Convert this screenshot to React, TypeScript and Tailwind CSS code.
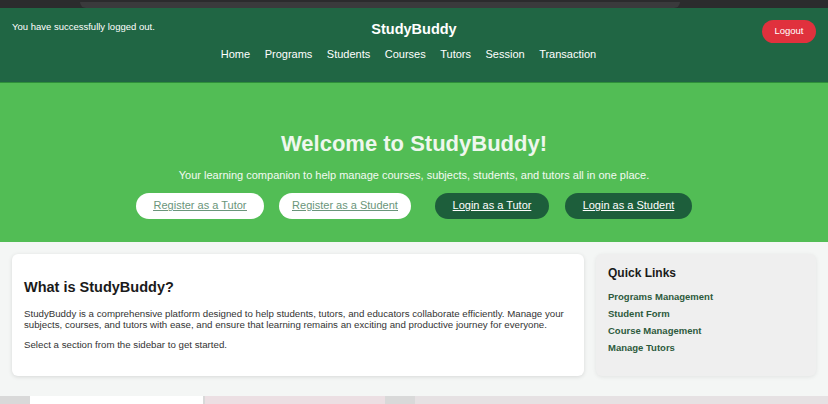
const navLinks = ["Home", "Programs", "Students", "Courses", "Tutors", "Session", "Transaction"];
const quickLinks = ["Programs Management", "Student Form", "Course Management", "Manage Tutors"];

export default function App() {
  return (
    <div className="w-[828px] h-[404px] overflow-hidden bg-[#f4f6f5] font-['Liberation_Sans',Arial,sans-serif] flex flex-col">
      {/* browser chrome strip */}
      <div className="h-[8px] bg-[#2b2b2d] flex items-end px-[80px]">
        <div className="h-[6px] w-[600px] bg-[#3a3a3c] rounded-b-md" />
      </div>

      <header className="h-[74px] bg-[#206644] text-white flex items-start justify-between px-3 pt-[10px] relative">
        <p className="text-[9.5px] mt-[2px] w-[180px]">You have successfully logged out.</p>
        <div className="flex flex-col items-center">
          <h1 className="text-[14.5px] font-bold leading-none mt-[4px]">StudyBuddy</h1>
          <nav className="flex gap-[14.5px] mt-[9px] mr-[11px] text-[11px]">
            {navLinks.map((l) => (
              <a key={l}>{l}</a>
            ))}
          </nav>
        </div>
        <div className="w-[180px] flex justify-end">
          <button className="bg-[#e0313d] text-white text-[9.5px] rounded-full w-[54px] h-[23px] mt-[2px]">Logout</button>
        </div>
      </header>

      <section className="h-[160px] bg-[#52bd55] border-t border-[#2e8f3a] flex flex-col items-center">
        <h2 className="text-[22px] font-bold text-[#eef7ee] mt-[50px] leading-none">Welcome to StudyBuddy!</h2>
        <p className="text-[11px] text-[#f2faf2] mt-[12px]">
          Your learning companion to help manage courses, subjects, students, and tutors all in one place.
        </p>
        <div className="flex items-center mt-[9px] text-[11px] underline">
          <button className="w-[128px] h-[26px] rounded-full bg-white text-[#6a957a] underline">Register as a Tutor</button>
          <button className="w-[132px] h-[26px] rounded-full bg-white text-[#6a957a] underline ml-[15px]">Register as a Student</button>
          <button className="w-[114px] h-[26px] rounded-full bg-[#1d5e3b] text-white underline ml-[24px]">Login as a Tutor</button>
          <button className="w-[127px] h-[26px] rounded-full bg-[#1d5e3b] text-white underline ml-[16px]">Login as a Student</button>
        </div>
      </section>

      <main className="flex gap-3 px-3 pt-[12px] h-[154px]">
        <div className="w-[572px] h-[122px] bg-white rounded-md shadow-[0_1px_4px_rgba(0,0,0,0.12)] px-3 pt-[26px]">
          <h3 className="text-[14.5px] font-bold text-[#1a1a1a] leading-none">What is StudyBuddy?</h3>
          <p className="text-[9.7px] text-[#333] mt-[13px] leading-[11px]">
            StudyBuddy is a comprehensive platform designed to help students, tutors, and educators collaborate efficiently. Manage your
            subjects, courses, and tutors with ease, and ensure that learning remains an exciting and productive journey for everyone.
          </p>
          <p className="text-[9.7px] text-[#333] mt-[8px]">Select a section from the sidebar to get started.</p>
        </div>
        <div className="w-[220px] h-[122px] bg-[#efefef] rounded-md shadow-[0_1px_4px_rgba(0,0,0,0.08)] px-3 pt-[13px]">
          <h4 className="text-[12px] font-bold text-[#1a1a1a] leading-none">Quick Links</h4>
          <ul className="mt-[12px] flex flex-col gap-[5px] text-[9.5px] font-bold text-[#2d5a3c] leading-[12px]">
            {quickLinks.map((l) => (
              <li key={l}>{l}</li>
            ))}
          </ul>
        </div>
      </main>

      {/* taskbar strip */}
      <div className="h-[8px] bg-[#d9d9d9] flex">
        <div className="w-[30px]" />
        <div className="w-[173px] bg-white" />
        <div className="w-[180px] bg-[#ecdfe3] ml-[2px]" />
        <div className="flex-1 bg-[#e6e1e3] ml-[30px]" />
      </div>
    </div>
  );
}
